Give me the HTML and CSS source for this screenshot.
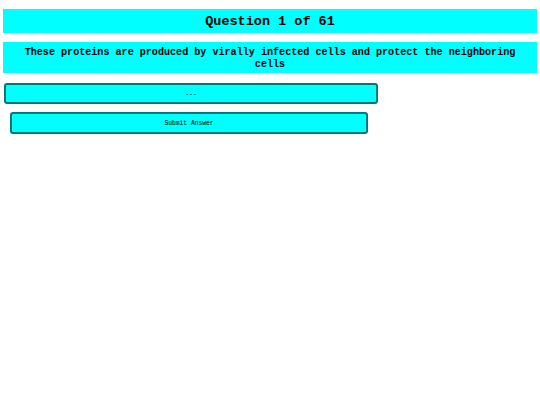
FILE: index.html
```html
<!DOCTYPE html>
<html>
<head>
<meta charset="utf-8">
<link rel="stylesheet" href="styles.css">
</head>
<body>
<div class="page">
  <div class="title">Question 1 of 61</div>
  <div class="question">These proteins are produced by virally infected cells and protect the neighboring cells</div>
  <div class="answer"><div class="select">---</div></div>
  <div class="actions"><div class="submit">Submit Answer</div></div>
</div>
</body>
</html>
```
FILE: styles.css
```css
html, body {
  margin: 0;
  padding: 0;
  background: #ffffff;
}
.page {
  padding: 9px 3px 0 3px;
  font-family: "Liberation Mono", "Courier New", monospace;
  color: #000;
}
.title {
  background: #00ffff;
  height: 24px;
  line-height: 25px;
  text-align: center;
  font-weight: bold;
  font-size: 13.5px;
}
.question {
  margin-top: 9px;
  background: #00ffff;
  padding: 5px 8px 3px 8px;
  height: 23px;
  text-align: center;
  font-weight: bold;
  font-size: 10.1px;
  line-height: 11.5px;
}
.answer {
  margin-top: 10px;
  padding-left: 1px;
}
.select {
  width: 370px;
  height: 17px;
  border: 2px solid #007878;
  border-radius: 3px;
  background: #00ffff;
  font-size: 6.3px;
  line-height: 19px;
  text-align: center;
}
.actions {
  margin-top: 8px;
  padding-left: 7px;
}
.submit {
  width: 354px;
  height: 18px;
  border: 2px solid #007878;
  border-radius: 3px;
  background: #00ffff;
  font-size: 6.3px;
  line-height: 20px;
  text-align: center;
}
```
